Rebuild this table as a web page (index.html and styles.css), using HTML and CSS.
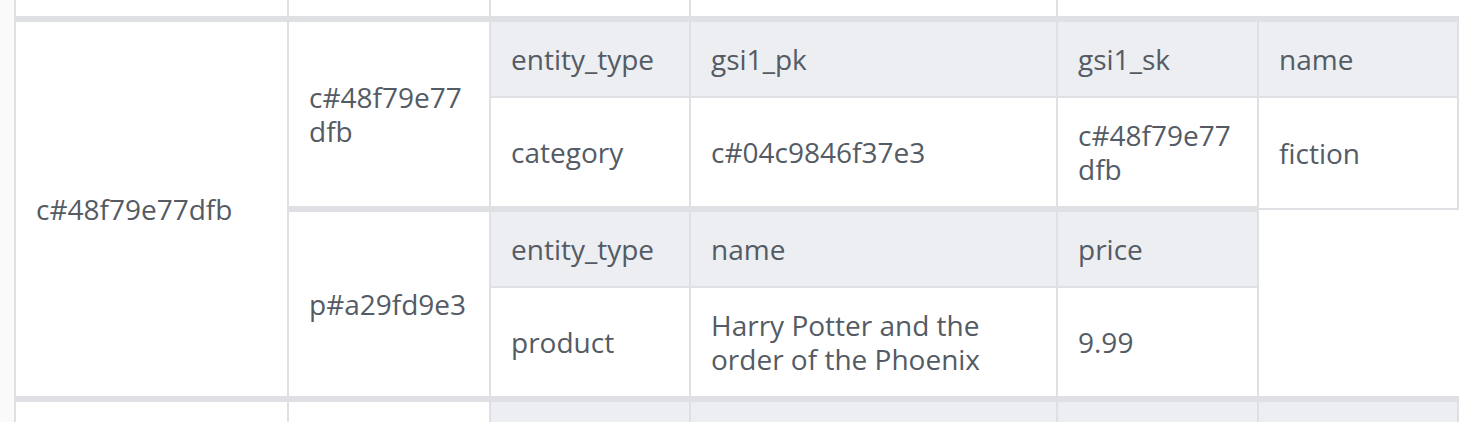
FILE: index.html
```html
<!DOCTYPE html>
<html lang="en">
<head>
    <meta charset="UTF-8">
    <meta name="viewport" content="width=device-width, initial-scale=1.0">
    <title>Items</title>
    <link rel="stylesheet" href="styles.css">
</head>
<body>

    <div class="sheet">
        <div class="gutter"></div>

        <table class="items">
            <colgroup>
                <col class="col-pk">
                <col class="col-sk">
                <col class="col-a">
                <col class="col-b">
                <col class="col-c">
                <col class="col-d">
            </colgroup>

            <!-- tail of the previous item -->
            <tr class="tail">
                <td></td>
                <td></td>
                <td></td>
                <td></td>
            </tr>

            <!-- c#48f79e77dfb -->
            <tr class="group">
                <td class="key" rowspan="4">c#48f79e77dfb</td>
                <td class="key" rowspan="2">c#48f79e77dfb</td>
                <th>entity_type</th>
                <th>gsi1_pk</th>
                <th>gsi1_sk</th>
                <th>name</th>
            </tr>
            <tr>
                <td>category</td>
                <td>c#04c9846f37e3</td>
                <td>c#48f79e77dfb</td>
                <td>fiction</td>
            </tr>
            <tr class="group">
                <td class="key" rowspan="2">p#a29fd9e3</td>
                <th>entity_type</th>
                <th>name</th>
                <th>price</th>
            </tr>
            <tr>
                <td>product</td>
                <td>Harry Potter and the order of the Phoenix</td>
                <td>9.99</td>
            </tr>

            <!-- next item -->
            <tr class="group">
                <td class="key" rowspan="2"></td>
                <td class="key" rowspan="2"></td>
                <th></th>
                <th></th>
                <th></th>
                <th></th>
            </tr>
        </table>
    </div>

</body>
</html>
```

FILE: styles.css
```css
html, body {
    margin: 0;
    padding: 0;
    height: 100%;
    overflow: hidden;
    background: #fff;
}

body {
    font-family: 'Open Sans', 'Noto Sans', sans-serif;
    font-size: 28px;
    line-height: 34px;
    color: #545b64;
}

.sheet {
    display: flex;
    align-items: flex-start;
}

.gutter {
    width: 14px;
    align-self: stretch;
    background: #fafafa;
}

/* Item table */
.items {
    border-collapse: collapse;
    table-layout: fixed;
    width: 1443px;
}

.col-pk { width: 273px; }
.col-sk { width: 202px; }
.col-a  { width: 200px; }
.col-b  { width: 367px; }
.col-c  { width: 201px; }
.col-d  { width: 200px; }

.items td,
.items th {
    border: 2px solid #dfe0e4;
    padding: 20px;
    text-align: left;
    vertical-align: middle;
    font-weight: normal;
    overflow-wrap: anywhere;
}

.items th {
    background: #eceef2;
}

.items td {
    background: #fff;
}

.items .group > td,
.items .group > th {
    border-top: 6px solid #dfe0e4;
}

.items .tail td {
    border-top: 0;
    padding: 0;
    height: 16px;
}
```
